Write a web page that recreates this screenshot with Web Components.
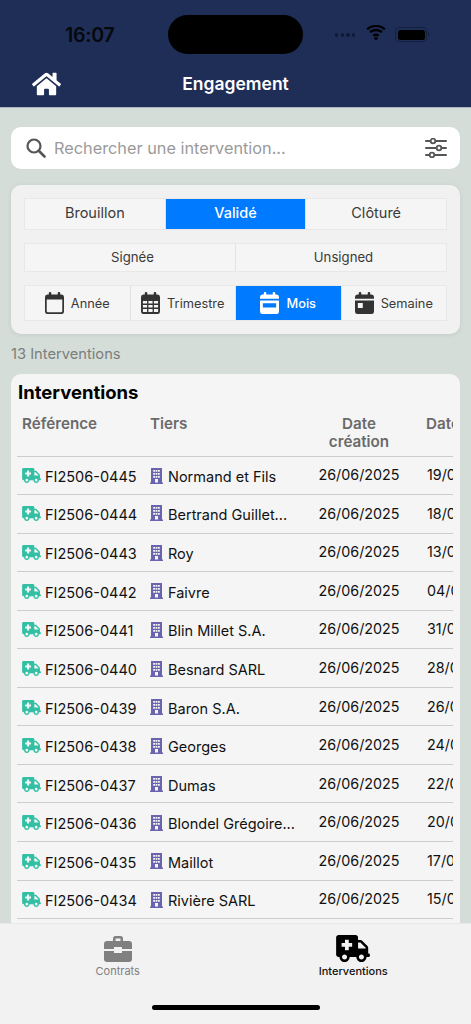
<!DOCTYPE html>
<html lang="fr"><head><meta charset="utf-8"><title>Engagement</title>
<style>
html,body{margin:0;height:100%}
body{font-family:Inter,"Liberation Sans",sans-serif;background:#d4ddd8;overflow:hidden}
app-shell{height:1024px}
</style></head><body>
<app-shell>
  <app-header title="Engagement"></app-header>
  <search-bar placeholder="Rechercher une intervention..."></search-bar>
  <filter-card>
    <seg-group size="big"><seg-btn>Brouillon</seg-btn><seg-btn active>Validé</seg-btn><seg-btn>Clôturé</seg-btn></seg-group>
    <seg-group size="mid"><seg-btn>Signée</seg-btn><seg-btn>Unsigned</seg-btn></seg-group>
    <seg-group size="ico"><seg-btn icon="cal-o">Année</seg-btn><seg-btn icon="cal-grid">Trimestre</seg-btn><seg-btn icon="cal-mid" active>Mois</seg-btn><seg-btn icon="cal-week">Semaine</seg-btn></seg-group>
  </filter-card>
  <result-count>13 Interventions</result-count>
  <data-table heading="Interventions">
    <table-row r="FI2506-0445" t="Normand et Fils" d="26/06/2025" e="19/06/2025"></table-row>
    <table-row style="--top:1px" r="FI2506-0444" t="Bertrand Guillet..." d="26/06/2025" e="18/06/2025"></table-row>
    <table-row r="FI2506-0443" t="Roy" d="26/06/2025" e="13/06/2025"></table-row>
    <table-row r="FI2506-0442" t="Faivre" d="26/06/2025" e="04/06/2025"></table-row>
    <table-row r="FI2506-0441" t="Blin Millet S.A." d="26/06/2025" e="31/05/2025"></table-row>
    <table-row r="FI2506-0440" t="Besnard SARL" d="26/06/2025" e="28/05/2025"></table-row>
    <table-row r="FI2506-0439" t="Baron S.A." d="26/06/2025" e="26/05/2025"></table-row>
    <table-row r="FI2506-0438" t="Georges" d="26/06/2025" e="24/05/2025"></table-row>
    <table-row r="FI2506-0437" t="Dumas" d="26/06/2025" e="22/05/2025"></table-row>
    <table-row r="FI2506-0436" t="Blondel Grégoire..." d="26/06/2025" e="20/05/2025"></table-row>
    <table-row r="FI2506-0435" t="Maillot" d="26/06/2025" e="17/05/2025"></table-row>
    <table-row r="FI2506-0434" t="Rivière SARL" d="26/06/2025" e="15/05/2025"></table-row>
  </data-table>
  <tab-bar></tab-bar>
</app-shell>
<script>
const AMB='M624 352h-16V243.9c0-12.7-5.1-24.9-14.1-33.9L494 110.1c-9-9-21.2-14.1-33.9-14.1H416V48c0-26.5-21.5-48-48-48H48C21.5 0 0 21.5 0 48v320c0 26.5 21.5 48 48 48h16c0 53 43 96 96 96s96-43 96-96h128c0 53 43 96 96 96s96-43 96-96h48c8.8 0 16-7.2 16-16v-32c0-8.8-7.2-16-16-16zM160 464c-26.5 0-48-21.5-48-48s21.5-48 48-48 48 21.5 48 48-21.5 48-48 48zm144-248c0 4.4-3.6 8-8 8h-56v56c0 4.4-3.6 8-8 8h-56c-4.4 0-8-3.6-8-8v-56h-56c-4.4 0-8-3.6-8-8v-56c0-4.4 3.6-8 8-8h56v-56c0-4.4 3.6-8 8-8h56c4.4 0 8 3.6 8 8v56h56c4.4 0 8 3.6 8 8v56zm176 248c-26.5 0-48-21.5-48-48s21.5-48 48-48 48 21.5 48 48-21.5 48-48 48zm80-208H416V144h44.1l99.9 99.9V256z';
const HOME='M280.37 148.26L96 300.11V464a16 16 0 0 0 16 16l112.06-.29a16 16 0 0 0 15.92-16V368a16 16 0 0 1 16-16h64a16 16 0 0 1 16 16v95.64a16 16 0 0 0 16 16.05L464 480a16 16 0 0 0 16-16V300L295.67 148.26a12.19 12.19 0 0 0-15.3 0zM571.6 251.47L488 182.56V44.05a12 12 0 0 0-12-12h-56a12 12 0 0 0-12 12v72.61L318.47 43a48 48 0 0 0-61 0L4.34 251.47a12 12 0 0 0-1.6 16.9l25.5 31A12 12 0 0 0 45.15 301l235.22-193.74a12.19 12.19 0 0 1 15.3 0L530.9 301a12 12 0 0 0 16.9-1.6l25.5-31a12 12 0 0 0-1.7-16.93z';
function calBase(inner,fill){
  return `<svg viewBox="0 0 20 22" width="19" height="22" preserveAspectRatio="none" fill="${fill}"><rect x="4" y="0" width="2.6" height="5" rx="1"/><rect x="13.4" y="0" width="2.6" height="5" rx="1"/>${inner}</svg>`;
}
const CALS={
 'cal-o':c=>calBase(`<path fill-rule="evenodd" d="M2.5 2.4h15A2.5 2.5 0 0 1 20 4.9v14.6a2.5 2.5 0 0 1-2.5 2.5h-15A2.5 2.5 0 0 1 0 19.5V4.9a2.5 2.5 0 0 1 2.5-2.5zM1.8 7.4v11.7c0 .6.5 1.1 1.1 1.1h14.2c.6 0 1.1-.5 1.1-1.1V7.4z"/>`,c),
 'cal-grid':c=>calBase(`<path fill-rule="evenodd" d="M2.5 2.4h15A2.5 2.5 0 0 1 20 4.9V19.5a2.5 2.5 0 0 1-2.5 2.5h-15A2.5 2.5 0 0 1 0 19.5V4.9a2.5 2.5 0 0 1 2.5-2.5zM2 9v2.6h4.4V9zm5.8 0v2.6h4.4V9zm5.8 0v2.6H18V9zM2 13v2.6h4.4V13zm5.8 0v2.6h4.4V13zm5.8 0v2.6H18V13zM2 17v3h4.4v-3zm5.8 0v3h4.4v-3zm5.8 0v3H18v-3z"/>`,c),
 'cal-mid':c=>calBase(`<path fill-rule="evenodd" d="M2.5 2.4h15A2.5 2.5 0 0 1 20 4.9v1.9H0V4.9a2.5 2.5 0 0 1 2.5-2.5zM0 8.4h20v11.1a2.5 2.5 0 0 1-2.5 2.5h-15A2.5 2.5 0 0 1 0 19.5zM3 11.2v4.2h14v-4.2z"/>`,c),
 'cal-week':c=>calBase(`<path fill-rule="evenodd" d="M2.5 2.4h15A2.5 2.5 0 0 1 20 4.9v1.9H0V4.9a2.5 2.5 0 0 1 2.5-2.5zM0 8.4h20v11.1a2.5 2.5 0 0 1-2.5 2.5h-15A2.5 2.5 0 0 1 0 19.5zM3 11v5h5.2v-5z"/>`,c)
};
function def(name,css,html){
  customElements.define(name,class extends HTMLElement{
    connectedCallback(){
      if(this.shadowRoot)return;
      const s=this.attachShadow({mode:'open'});
      s.innerHTML=`<style>${css}</style>`+(typeof html==='function'?html(this):html);
    }
  });
}
def('app-shell',':host{display:flex;flex-direction:column;height:1024px;overflow:hidden;position:relative}','<slot></slot>');
def('status-bar',`:host{display:flex;align-items:center;height:39px;padding:15px 44px 0 65px;color:#0b1120}
 .t{width:103px;font:600 19.5px/39px Inter,sans-serif;letter-spacing:-.2px;position:relative;top:1px;color:#05080f}
 .i{width:135px;height:39px;border-radius:20px;background:#000}
 .r{display:flex;align-items:center;margin-left:32px;height:39px}
 .d{display:flex;gap:2.2px;width:31px;margin-top:1px}.d i{width:3.4px;height:3.4px;border-radius:50%;background:#0e1a38}
 .b{border:1px solid #131f40;border-radius:4px;padding:1.5px;margin-left:9px;position:relative;display:block;box-sizing:content-box;width:27px;height:10px}
 .b i{display:block;width:100%;height:100%;background:#000;border-radius:2.5px}
 .b:after{content:"";position:absolute;right:-3px;top:4px;width:1.5px;height:4px;background:#131f40}
`,`<span class="t">16:07</span><span class="i"></span><span class="r"><span class="d"><i></i><i></i><i></i><i></i></span>
 <svg width="20" height="16" viewBox="0 0 20 16" style="margin-top:-4px"><path fill="#000" d="M10 2c3.100 0 5.900 1.200 7.900 3.200l1.700-1.800C17 1 13.700-.1 10 0 6.300-.1 3 1 .4 3.400l1.700 1.800C4.100 3.200 6.900 2 10 2z"/><path fill="#000" d="M10 6.300c1.900 0 3.600.7 4.900 1.900l1.700-1.800C14.900 4.800 12.600 3.800 10 3.800S5.100 4.800 3.400 6.400l1.700 1.800C6.400 7 8.100 6.300 10 6.300z"/><path fill="#000" d="M10 8.600c1.400 0 2.500.5 3.400 1.300l-1.700 1.800c-.4-.4-1-.7-1.700-.7s-1.300.3-1.700.7L6.600 9.900c.9-.8 2-1.300 3.400-1.300z"/><path fill="#000" d="M7.800 13.200 10 15.600l2.200-2.400c-.5-.5-1.300-.9-2.200-.9s-1.700.4-2.200.9z"/></svg>
 <span class="b"><i></i></span></span>`);
def('app-header',`:host{display:block;background:#1f2e56;height:107px;border-bottom:1px solid #a9b4bf;box-sizing:content-box}
 .n{display:grid;grid-template-columns:1fr auto 1fr;align-items:center;height:53px;padding:7px 32px 0;box-sizing:border-box}
 svg{display:block;width:29px;height:26px}
 .h{font:600 17.5px/22px Inter,sans-serif;color:#fff}`,
 h=>`<status-bar></status-bar><div class="n"><svg viewBox="0 0 576 512" fill="#fff"><path d="${HOME}"/></svg><div class="h">${h.getAttribute('title')}</div><span></span></div>`);
def('search-bar',`:host{display:flex;align-items:center;gap:7px;height:42px;margin:19px 11px 0;padding:0 13px 0 15px;background:#fff;border-radius:10px;box-sizing:border-box}
 span{flex:1;font:400 16.3px/20px Inter,sans-serif;color:#9a9a9a;margin-left:1px}`,
 h=>`<svg width="20" height="20" viewBox="0 0 20 20" fill="none" stroke="#555" stroke-width="2.2"><circle cx="8" cy="8" r="6.5"/><path stroke-linecap="round" stroke-width="2.6" d="M13 13l5.500 5.500"/></svg><span>${h.getAttribute('placeholder')}</span>
 <svg width="22" height="20" viewBox="0 0 22 20" fill="none" stroke="#555" stroke-width="2"><path stroke-linecap="round" d="M1 3h20M1 10h20M1 17h20"/><g fill="#fff" stroke-width="1.8"><circle cx="8" cy="3" r="2.3"/><circle cx="14" cy="10" r="2.3"/><circle cx="7" cy="17" r="2.3"/></g></svg>`);
def('filter-card',`:host{display:flex;flex-direction:column;margin:16px 11px 0;padding:13px;gap:13px;height:149px;box-sizing:border-box;background:#f1f1f1;border-radius:10px;box-shadow:0 1px 5px rgba(0,0,0,.08)}`,'<slot></slot>');
customElements.define('seg-group',class extends HTMLElement{
  connectedCallback(){
    if(this.shadowRoot)return;
    const sz=this.getAttribute('size');
    const h={big:32,mid:29,ico:36}[sz],f={big:14.5,mid:13.2,ico:12.8}[sz];
    const s=this.attachShadow({mode:'open'});
    s.innerHTML=`<style>:host{display:flex;height:${h}px;font:400 ${f}px/16px Inter,sans-serif;border:1px solid #e8e8e8;box-sizing:border-box;background:#f5f5f5;--pt:${sz==='ico'?1:0}px;--pl:${sz==='mid'?5:0}px;--pb:${sz==='big'?3:sz==='mid'?1:0}px}::slotted(seg-btn){flex:1 1 0;min-width:0}</style><slot></slot>`;
  }
});
customElements.define('seg-btn',class extends HTMLElement{
  connectedCallback(){
    if(this.shadowRoot)return;
    const a=this.hasAttribute('active'),ic=this.getAttribute('icon');
    const col=a?'#fff':'#3a3a3a',ico=a?'#fff':'#333';
    const s=this.attachShadow({mode:'open'});
    s.innerHTML=`<style>:host{display:flex;align-items:center;justify-content:center;gap:7px;color:${col};background:${a?'#007aff':'transparent'};${a?'font-weight:500;':''}border-right:1px solid #e3e3e3;box-sizing:border-box;padding:var(--pt) 0 var(--pb) var(--pl)}:host(:last-child){border-right:0}svg{display:block;margin-top:-1px}</style>${ic?CALS[ic](ico):''}<slot></slot>`;
  }
});
def('result-count',`:host{display:block;margin:11px 11px 0;font:400 14.7px/18px Inter,sans-serif;color:#7a7f7d}`,'<slot></slot>');
def('data-table',`:host{display:block;margin:11px 11px 0;padding:0 7px 0 6px;background:#f5f5f5;border-radius:10px 10px 0 0;flex:1 0 auto;min-height:0}
 h2{margin:0;font:700 18.5px/22px Inter,sans-serif;color:#000;padding:7px 0 0 1px}
 .c{overflow:hidden}
 .head{display:grid;grid-template-columns:128px 159px 100px 120px;padding:12px 0 0 5px;height:53.5px;box-sizing:border-box;border-bottom:1.5px solid #ccc;font:600 15.2px/18px Inter,sans-serif;color:#6a6a6a;width:560px}
 .m{text-align:center}.e{padding-left:17px}`,
 h=>`<h2>${h.getAttribute('heading')}</h2><div class="c"><div class="head"><span>Référence</span><span>Tiers</span><span class="m">Date<br>création</span><span class="e">Date</span></div><slot></slot></div>`);
def('table-row',`:host{display:grid;grid-template-columns:128px 159px 100px 120px;align-items:center;height:38.55px;box-sizing:border-box;padding-left:5px;border-bottom:1.5px solid #ccc;font:400 14.5px/18px Inter,sans-serif;color:#111;width:560px}
 .a{display:flex;align-items:center;gap:4px;position:relative;top:var(--top,2px)}.a svg{margin-top:-3px;display:block}
 .d{text-align:center;font-size:14.3px}.e{padding-left:18px;font-size:14.3px}`,
 h=>`<span class="a"><svg width="19" height="15" viewBox="0 0 640 512" fill="#33bfa3"><path d="${AMB}"/></svg><span>${h.getAttribute('r')}</span></span>
 <span class="a" style="gap:5px"><svg width="13" height="16" viewBox="0 0 13 16"><path fill="#6a63ad" fill-rule="evenodd" d="M1 0h11v14.5h1V16H0v-1.500h1zM3.200 2v1.800H5V2zm2.400 0v1.800h1.800V2zM8 2v1.800h1.800V2zM3.200 5v1.800H5V5zm2.400 0v1.800h1.800V5zM8 5v1.800h1.800V5zM3.200 8v1.800H5V8zm2.400 0v1.800h1.800V8zM8 8v1.800h1.800V8zM5 11v3.500h3V11z"/></svg><span>${h.getAttribute('t')}</span></span>
 <span class="d">${h.getAttribute('d')}</span><span class="e">${h.getAttribute('e')}</span>`);
def('tab-bar',`:host{position:absolute;left:0;right:0;bottom:0;height:101px;background:#f2f2f2;border-top:1px solid #e8e8e8;box-sizing:border-box;display:block}
 .t{display:grid;grid-template-columns:1fr 1fr;padding-top:11px}
 .b{display:flex;flex-direction:column;align-items:center;height:45px;font:400 11px/14px Inter,sans-serif;color:#808080}
 .b.on{color:#111;font-weight:500}
 .b svg{display:block;height:27px;margin-bottom:2px}
 .h{width:168px;height:5px;border-radius:3px;background:#000;margin:25px auto 0}`,
 `<div class="t"><div class="b"><svg width="28" height="27" viewBox="0 0 28 27" fill="#808080"><path fill-rule="evenodd" d="M9 6V3.500A2.500 2.500 0 0 1 11.500 1h5A2.500 2.500 0 0 1 19 3.500V6h6a3 3 0 0 1 3 3v5H18v-2h-8v2H0V9a3 3 0 0 1 3-3zm2.500-2.500V6h5V3.500z"/><path d="M0 16h10v2h8v-2h10v8a3 3 0 0 1-3 3H3a3 3 0 0 1-3-3z"/></svg>Contrats</div>
 <div class="b on"><svg width="34" height="27" viewBox="0 0 640 512" fill="#000"><path d="${AMB}"/></svg>Interventions</div></div><div class="h"></div>`);
</script>
</body></html>
